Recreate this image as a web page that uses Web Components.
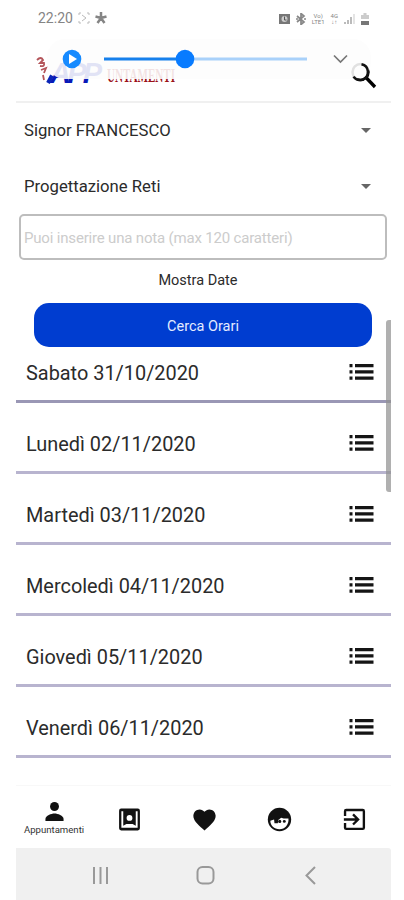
<!DOCTYPE html>
<html lang="it">
<head>
<meta charset="utf-8">
<meta name="viewport" content="width=device-width, initial-scale=1">
<title>Appuntamenti</title>
<style>
  body {
    margin: 0;
    background: #fff;
    color: #2b2b2b;
    font-family: Roboto, sans-serif;
  }
</style>
</head>
<body>
<booking-app></booking-app>

<script>
// small helper: every component writes its markup into an open shadow root
class BaseElement extends HTMLElement {
  constructor() {
    super();
    this.attachShadow({ mode: "open" });
  }

  connectedCallback() {
    this.shadowRoot.innerHTML = this.render();
  }
}

const ICONS = {
  list: `<path d="M2.500 4h3v3.200h-3zm0 6.300h3v3.200h-3zm0 6.300h3v3.200h-3zM8 4h18.500v3.200H8zm0 6.300h18.500v3.200H8zm0 6.300h18.500v3.200H8z"/>`,
  person: `<circle cx="12" cy="7.200" r="4.300"/><path d="M3.300 21v-1.800c0-3.200 5.700-5.200 8.700-5.200s8.700 2 8.700 5.200V21z"/>`,
  book: `<path fill-rule="evenodd" d="M4 1.500h16a2 2 0 0 1 2 2v17a2 2 0 0 1-2 2H4a2 2 0 0 1-2-2v-17a2 2 0 0 1 2-2zM4.200 4v16h15.600V4h-1.800v14l-3-1.700H9L6 18V4z"/><circle cx="12" cy="10.500" r="2.800" fill="#fff"/>`,
  heart: `<path d="M12 22.500l-1.500-1.300C5 16.300 1.300 13 1.300 8.500 1.300 5 4 2.300 7.300 2.300c1.900 0 3.600.9 4.700 2.300 1.100-1.400 2.800-2.300 4.700-2.300 3.300 0 6 2.700 6 6.200 0 4.500-3.700 7.800-9.200 12.700z"/>`,
  face: `<circle cx="12" cy="12" r="11.200"/><path fill="#fff" d="M3.200 13.300l3.600-1.300.4 3.600h3.200l.4-3.200 2.800-2.200c2.200.9 4.500 1.100 7 .8.600 5.900-3.400 10.300-8.600 10.300s-8.800-3.500-8.800-8z"/><circle cx="12.200" cy="13.800" r="1.500"/><circle cx="16.600" cy="13.800" r="1.400"/>`,
  exit: `<path transform="translate(-1.600 -1.600) scale(1.130)" d="M10.090 15.590L11.500 17l5-5-5-5-1.410 1.410L12.670 11H3v2h9.670zM19 3H5a2 2 0 0 0-2 2v4h2V5h14v14H5v-4H3v4a2 2 0 0 0 2 2h14a2 2 0 0 0 2-2V5a2 2 0 0 0-2-2z"/>`
};

class StatusBar extends BaseElement {
  render() {
    return `
      <style>
        :host {
          display: flex;
          align-items: center;
          height: 36px;
          padding: 0 20px 0 22px;
          color: #858585;
          font-size: 14px;
        }
        svg { display: block; }
        .left { margin: 0 5px; }
        .right { display: flex; align-items: center; gap: 6px; margin: 1px 2px 0 auto; }
        .volte { font-size: 6px; line-height: 6px; text-align: center; }
      </style>
      <span>22:20</span>
      <svg class="left" width="12" height="12" viewBox="0 0 12 12" fill="none" stroke="#bbb">
        <path d="M1 3V1h2M9 1h2v2M11 9v2H9M3 11H1V9"/><path d="M4 3l4 3-4 3"/>
      </svg>
      <svg width="12" height="12" viewBox="0 0 12 12" stroke="#858585" stroke-width="2.500">
        <path d="M6 0v6M.5 4.500L6 6M11.500 4.500L6 6M2.500 11L6 6M9.500 11L6 6"/>
      </svg>
      <div class="right">
        <svg width="11" height="12" viewBox="0 0 11 12">
          <path d="M0 1h11v10H0z" fill="#777"/><circle cx="5.500" cy="6" r="3" fill="#ccc"/><path d="M5.500 3.500V7h2" fill="none" stroke="#555"/>
        </svg>
        <svg width="10" height="12" viewBox="0 0 10 12" fill="none" stroke="#888" stroke-width="1.700">
          <path d="M1 3l7 6-3 2.500V.5L8 3 1 9M0 6h2M8 6h2"/>
        </svg>
        <div class="volte">Vo)<br>LTE1</div>
        <div class="volte">4G<br>↓↑</div>
        <svg width="11" height="11" viewBox="0 0 11 11" fill="#bbb">
          <path d="M0 9h2v2H0zM3 7h2v4H3zM6 4h2v7H6z"/><path d="M9 1h2v10H9z" fill="#e4e4e4"/>
        </svg>
        <svg width="8" height="12" viewBox="0 0 8 12">
          <path d="M2.500 0h3v2H8v4H0V2h2.500z" fill="#ccc"/><path d="M0 8h8v4H0z" fill="#777"/>
        </svg>
      </div>
    `;
  }
}

// logo and search, with the floating recorder bar laid over them
class AppHeader extends BaseElement {
  render() {
    return `
      <style>
        :host {
          display: block;
          position: relative;
          height: 65px;
          border-bottom: 2px solid #f0f0f0;
        }
        .bar {
          display: flex;
          justify-content: space-between;
          height: 100%;
        }
        .search { margin: 25px 14px 0 0; }
        .player {
          position: absolute;
          top: 3px;
          left: 31px;
          width: 324px;
          height: 40px;
          border-radius: 18px;
          background: rgba(253, 253, 253, 0.89);
        }
        .controls { position: absolute; top: 0; left: 0; }
      </style>
      <div class="bar">
        <svg width="200" height="65" viewBox="16 36 200 65">
          <text x="50" y="83" textLength="52" font-family="Liberation Sans, sans-serif" font-size="29" font-style="italic" font-weight="700" fill="#0819b8">APP</text>
          <text x="107" y="82" textLength="68" lengthAdjust="spacingAndGlyphs" font-family="Liberation Serif, serif" font-size="18" font-weight="700" fill="#9b1118">UNTAMENTI</text>
        </svg>
        <svg class="search" width="26" height="30" viewBox="0 0 26 30" fill="none" stroke="#000">
          <circle cx="9.500" cy="11" r="8" stroke-width="2.500"/><path d="M15.500 17l8.500 9" stroke-width="3.300"/>
        </svg>
      </div>
      <div class="player"></div>
      <svg class="controls" width="375" height="65" viewBox="16 36 375 65">
        <path d="M37 60q4-4 6 0l-3 3h4q1 4-4 3M41 70l5-2-2 5M43 75l1 5" fill="none" stroke="#b4555a" stroke-width="1.800"/>
        <path d="M52 75.500l-4 7.500" stroke="#0a25b7" stroke-width="4"/>
        <path d="M104 59h82" stroke="#1680ec" stroke-width="3"/>
        <path d="M186 59h121" stroke="#a9d1fa" stroke-width="3"/>
        <circle cx="185" cy="59" r="9.300" fill="#087bff"/>
        <circle cx="72" cy="59" r="9.300" fill="#168aff"/>
        <path d="M69 54v10l8-5z" fill="#fff"/>
        <path d="M334 55.500l6.500 6.500 6.500-6.500" fill="none" stroke="#777" stroke-width="1.700"/>
        <path d="M361.500 64.200a8 8 0 0 1 1 15.400a8 8 0 0 1-9-3" fill="none" stroke="#111" stroke-width="2.500"/>
      </svg>
    `;
  }
}

class SpinnerField extends BaseElement {
  render() {
    return `
      <style>
        :host {
          display: flex;
          align-items: center;
          justify-content: space-between;
          height: 56px;
          padding: 0 20px 2px 8px;
          box-sizing: border-box;
          font-size: 16.700px;
        }
        i {
          border: 5px solid transparent;
          border-top: 5px solid #666;
          border-bottom: 0;
        }
      </style>
      <span><slot></slot></span><i></i>
    `;
  }
}

class NoteField extends BaseElement {
  render() {
    return `
      <style>
        :host {
          display: flex;
          align-items: center;
          box-sizing: border-box;
          height: 46px;
          margin: -1px 4px 0 3px;
          padding: 2px 4px 0 3px;
          border: 2px solid #bdbdbd;
          border-radius: 5px;
          color: #ccc;
          font-size: 15px;
          letter-spacing: -0.180px;
          white-space: nowrap;
        }
      </style>
      <span><slot></slot></span>
    `;
  }
}

class SearchButton extends BaseElement {
  render() {
    return `
      <style>
        :host {
          display: flex;
          align-items: center;
          justify-content: center;
          height: 44px;
          margin: 0 19px 0 18px;
          padding-top: 3px;
          box-sizing: border-box;
          border-radius: 15px;
          background: #003dd0;
          color: #e2ebff;
          font-size: 14.500px;
        }
      </style>
      <slot></slot>
    `;
  }
}

class DateRow extends BaseElement {
  render() {
    return `
      <style>
        :host {
          display: flex;
          align-items: flex-end;
          justify-content: space-between;
          box-sizing: border-box;
          height: 71px;
          padding: 0 16px 14px 10px;
          border-bottom: 3px solid #b8b4cf;
          font-size: 19.900px;
          line-height: 24px;
        }
        /* the first row is scrolled partly under the button */
        :host(:first-child) { height: 56px; border-color: #9a97b5; }
        svg { display: block; margin-bottom: 2px; }
      </style>
      <span><slot></slot></span>
      <svg width="28" height="24" viewBox="0 0 28 24" fill="#151515">${ICONS.list}</svg>
    `;
  }
}

class TabItem extends BaseElement {
  render() {
    return `
      <style>
        :host {
          display: flex;
          flex-direction: column;
          align-items: center;
          justify-content: center;
          box-sizing: border-box;
          width: 75px;
          padding-top: 5px;
          padding-left: 1px;
          color: #333;
          font-size: 9.600px;
          line-height: 11px;
        }
        :host([icon="person"]) { padding-top: 0; }
        svg { display: block; }
      </style>
      <svg width="25" height="25" viewBox="0 0 24 24" fill="#111">${ICONS[this.getAttribute("icon")]}</svg>
      <slot></slot>
    `;
  }
}

class SystemNav extends BaseElement {
  render() {
    return `
      <style>
        :host { display: block; height: 52px; background: #f0f0f0; border-radius: 0 3px 0 0; }
        svg { display: block; }
      </style>
      <svg width="375" height="52" viewBox="16 848 375 52" fill="none" stroke="#999" stroke-width="2">
        <path d="M94 867v17M100.500 867v17M107 867v17"/>
        <rect x="197.500" y="867" width="16" height="16.500" rx="5"/>
        <path d="M315 867l-8.500 8.500 8.500 8.500"/>
      </svg>
    `;
  }
}

class BookingApp extends BaseElement {
  render() {
    const days = [
      "Sabato 31/10/2020",
      "Lunedì 02/11/2020",
      "Martedì 03/11/2020",
      "Mercoledì 04/11/2020",
      "Giovedì 05/11/2020",
      "Venerdì 06/11/2020"
    ];

    return `
      <style>
        :host {
          display: flex;
          flex-direction: column;
          position: relative;
          box-sizing: border-box;
          width: 404px;
          height: 900px;
          padding: 0 13px 0 16px;
          overflow: hidden;
        }
        .caption { height: 43px; line-height: 41px; text-align: center; font-size: 14.500px; padding-right: 11px; }
        .dates { flex: 1; }
        nav { display: flex; height: 62px; border-top: 1px solid #f8f8f8; }
        .scroll {
          position: absolute;
          left: 386px;
          top: 320px;
          width: 5px;
          height: 172px;
          border-radius: 3px 0 0 3px;
          background: rgba(145, 145, 145, 0.72);
        }
      </style>
      <status-bar></status-bar>
      <app-header></app-header>
      <spinner-field>Signor FRANCESCO</spinner-field>
      <spinner-field>Progettazione Reti</spinner-field>
      <note-field>Puoi inserire una nota (max 120 caratteri)</note-field>
      <div class="caption">Mostra Date</div>
      <search-button>Cerca Orari</search-button>
      <div class="dates">
        ${days.map(day => `<date-row>${day}</date-row>`).join("")}
      </div>
      <nav>
        <tab-item icon="person">Appuntamenti</tab-item>
        <tab-item icon="book"></tab-item>
        <tab-item icon="heart"></tab-item>
        <tab-item icon="face"></tab-item>
        <tab-item icon="exit"></tab-item>
      </nav>
      <system-nav></system-nav>
      <div class="scroll"></div>
    `;
  }
}

customElements.define("status-bar", StatusBar);
customElements.define("app-header", AppHeader);
customElements.define("spinner-field", SpinnerField);
customElements.define("note-field", NoteField);
customElements.define("search-button", SearchButton);
customElements.define("date-row", DateRow);
customElements.define("tab-item", TabItem);
customElements.define("system-nav", SystemNav);
customElements.define("booking-app", BookingApp);
</script>
</body>
</html>
